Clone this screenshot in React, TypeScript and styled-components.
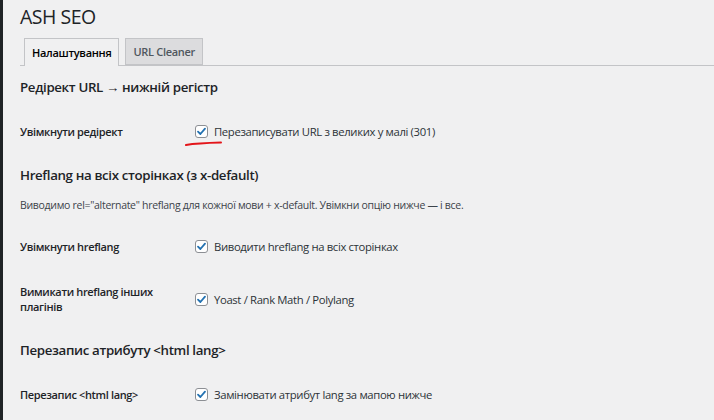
import React from "react";
import styled, { createGlobalStyle } from "styled-components";

const Global = createGlobalStyle`
  html, body { margin: 0; padding: 0; background: #f0f0f1; }
  body {
    border-left: 3px solid #1f2326;
    min-height: 420px;
    box-sizing: border-box;
    font-family: "Open Sans", "Noto Sans", sans-serif;
    color: #1d2327;
    overflow: hidden;
  }
`;

const Wrap = styled.div`
  padding: 0 0 0 17px;
`;

const Title = styled.h1`
  margin: 0;
  padding: 3px 0 0;
  font-size: 19.5px;
  letter-spacing: -0.5px;
  font-weight: 400;
  line-height: 28px;
  color: #1d2327;
`;

const TabBar = styled.nav`
  display: flex;
  gap: 6px;
  margin-top: 7px;
  padding-left: 4px;
  border-bottom: 1px solid #c3c4c7;
  height: 27px;
  align-items: flex-end;
`;

const Tab = styled.div<{ $active?: boolean }>`
  box-sizing: border-box;
  height: ${(p) => (p.$active ? "28px" : "27px")};
  margin-bottom: ${(p) => (p.$active ? "-1px" : "0")};
  padding: 0 7px;
  display: flex;
  align-items: center;
  font-size: 11px;
  letter-spacing: -0.3px;
  font-weight: 600;
  border: 1px solid #c3c4c7;
  border-bottom: ${(p) => (p.$active ? "none" : "1px solid #c3c4c7")};
  background: ${(p) => (p.$active ? "#f0f0f1" : "#dcdcde")};
  color: ${(p) => (p.$active ? "#000" : "#50575e")};
`;

const Heading = styled.h2`
  margin: 10px 0 11px;
  height: 22px;
  display: flex;
  align-items: center;
  font-size: 13.3px;
  letter-spacing: -0.35px;
  font-weight: 600;
  color: #1d2327;
`;

const Desc = styled.p`
  margin: 0 0 11px;
  height: 16px;
  display: flex;
  align-items: center;
  font-size: 10.5px;
  letter-spacing: -0.3px;
  color: #3c434a;
`;

const Row = styled.div`
  display: grid;
  grid-template-columns: 175px 1fr;
  align-items: center;
  padding: 15px 0;
`;

const Label = styled.div`
  font-size: 11px;
  letter-spacing: -0.35px;
  font-weight: 600;
  line-height: 15px;
  color: #1d2327;
  padding-right: 20px;
`;

const Field = styled.label`
  position: relative;
  display: flex;
  align-items: center;
  gap: 6px;
  font-size: 11.3px;
  letter-spacing: -0.35px;
  color: #2c3338;
  line-height: 15px;
`;

const Box = styled.span`
  width: 13px;
  height: 13px;
  box-sizing: border-box;
  border: 1px solid #8c8f94;
  border-radius: 3px;
  background: #fff;
  display: inline-flex;
  align-items: center;
  justify-content: center;
`;

const Mark = styled.svg`
  position: absolute;
  left: -10px;
  top: 17px;
  overflow: visible;
`;

const Check = () => (
  <Box>
    <svg width="11" height="11" viewBox="0 0 11 11">
      <path d="M2 5.6 L4.4 8 L9 2.6" fill="none" stroke="#2271b1" strokeWidth="1.8" strokeLinecap="round" strokeLinejoin="round" />
    </svg>
  </Box>
);

const Setting = ({ label, text, marked }: { label: React.ReactNode; text: string; marked?: boolean }) => (
  <Row>
    <Label>{label}</Label>
    <Field>
      <Check />
      {text}
      {marked && (
        <Mark width="40" height="6" viewBox="0 0 40 6">
          <path d="M1 4 Q 12 2.2 36 1.6" fill="none" stroke="#e3151a" strokeWidth="2" strokeLinecap="round" />
        </Mark>
      )}
    </Field>
  </Row>
);

export default function App() {
  return (
    <>
      <Global />
      <Wrap>
        <Title>ASH SEO</Title>
        <TabBar>
          <Tab $active>Налаштування</Tab>
          <Tab>URL Cleaner</Tab>
        </TabBar>
        <Heading>Редірект URL → нижній регістр</Heading>
        <Setting label="Увімкнути редірект" text="Перезаписувати URL з великих у малі (301)" marked />
        <Heading>Hreflang на всіх сторінках (з x-default)</Heading>
        <Desc>Виводимо rel="alternate" hreflang для кожної мови + x-default. Увімкни опцію нижче — і все.</Desc>
        <Setting label="Увімкнути hreflang" text="Виводити hreflang на всіх сторінках" />
        <Setting label="Вимикати hreflang інших плагінів" text="Yoast / Rank Math / Polylang" />
        <Heading>Перезапис атрибуту &lt;html lang&gt;</Heading>
        <Setting label="Перезапис <html lang>" text="Замінювати атрибут lang за мапою нижче" />
      </Wrap>
    </>
  );
}
